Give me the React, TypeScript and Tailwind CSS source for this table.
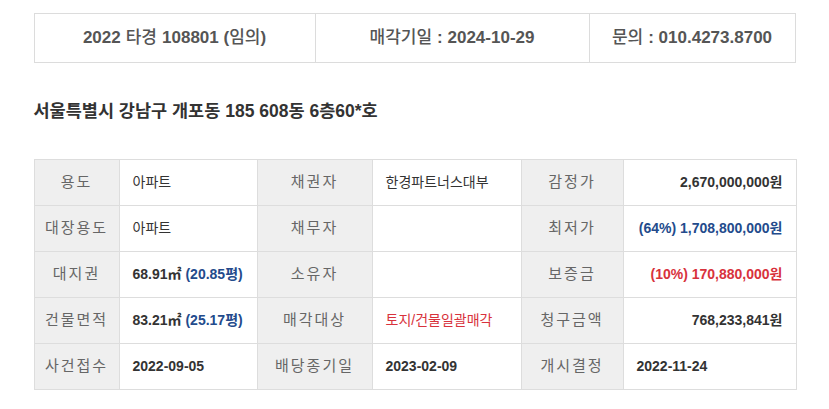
const font = { fontFamily: '"Liberation Sans", "Noto Sans CJK KR", sans-serif' };

const th = "bg-[#efefef] text-[#666] text-[15px] tracking-[2px] text-center font-normal border border-[#ddd] h-[46px]";
const td = "bg-white text-[14px] border border-[#ddd] px-[13px] h-[46px]";

export default function App() {
  return (
    <main className="min-h-screen bg-white pt-[13px]" style={font}>
      <div className="w-[762px] mx-auto" style={font}>
        {/* 사건 헤더 */}
        <div className="flex h-[50px] border border-[#dcdcdc] text-[#555] text-[17px]">
          <div className="w-[281px] flex items-center justify-center border-r border-[#dcdcdc] font-bold">
            2022 <span className="font-medium mx-[5px]">타경</span> 108801 (<span className="font-medium">임의</span>)
          </div>
          <div className="w-[274px] flex items-center justify-center border-r border-[#dcdcdc]">
            <span className="font-medium">매각기일</span>
            <span className="font-bold ml-[5px]">: 2024-10-29</span>
          </div>
          <div className="flex-1 flex items-center justify-center">
            <span className="font-medium">문의</span>
            <span className="font-bold ml-[5px]">: 010.4273.8700</span>
          </div>
        </div>

        <h1 className="mt-[35px] mb-[35px] text-[17.5px] font-bold text-[#333] leading-[26px]">
          서울특별시 강남구 개포동 185 608동 6층60*호
        </h1>

        <table className="w-[762px] border-collapse table-fixed text-[#333]">
          <colgroup>
            <col className="w-[85px]" />
            <col className="w-[138px]" />
            <col className="w-[115px]" />
            <col className="w-[149px]" />
            <col className="w-[102px]" />
            <col className="w-[173px]" />
          </colgroup>
          <tbody>
            <tr>
              <th className={th}>용도</th>
              <td className={td}>아파트</td>
              <th className={th}>채권자</th>
              <td className={td}>한경파트너스대부</td>
              <th className={th}>감정가</th>
              <td className={`${td} text-right font-bold`}>2,670,000,000원</td>
            </tr>
            <tr>
              <th className={th}>대장용도</th>
              <td className={td}>아파트</td>
              <th className={th}>채무자</th>
              <td className={td}></td>
              <th className={th}>최저가</th>
              <td className={`${td} text-right font-bold`}>
                <span className="text-[#234b8c]">(64%) 1,708,800,000원</span>
              </td>
            </tr>
            <tr>
              <th className={th}>대지권</th>
              <td className={`${td} font-bold`}>
                68.91㎡ <span className="text-[#234b8c]">(20.85평)</span>
              </td>
              <th className={th}>소유자</th>
              <td className={td}></td>
              <th className={th}>보증금</th>
              <td className={`${td} text-right font-bold`}>
                <span className="text-[#d8323c]">(10%) 170,880,000원</span>
              </td>
            </tr>
            <tr>
              <th className={th}>건물면적</th>
              <td className={`${td} font-bold`}>
                83.21㎡ <span className="text-[#234b8c]">(25.17평)</span>
              </td>
              <th className={th}>매각대상</th>
              <td className={td}>
                <span className="text-[#d8323c]">토지/건물일괄매각</span>
              </td>
              <th className={th}>청구금액</th>
              <td className={`${td} text-right font-bold`}>768,233,841원</td>
            </tr>
            <tr>
              <th className={th}>사건접수</th>
              <td className={`${td} font-bold`}>2022-09-05</td>
              <th className={th}>배당종기일</th>
              <td className={`${td} font-bold`}>2023-02-09</td>
              <th className={th}>개시결정</th>
              <td className={`${td} font-bold`}>2022-11-24</td>
            </tr>
          </tbody>
        </table>
      </div>
    </main>
  );
}
